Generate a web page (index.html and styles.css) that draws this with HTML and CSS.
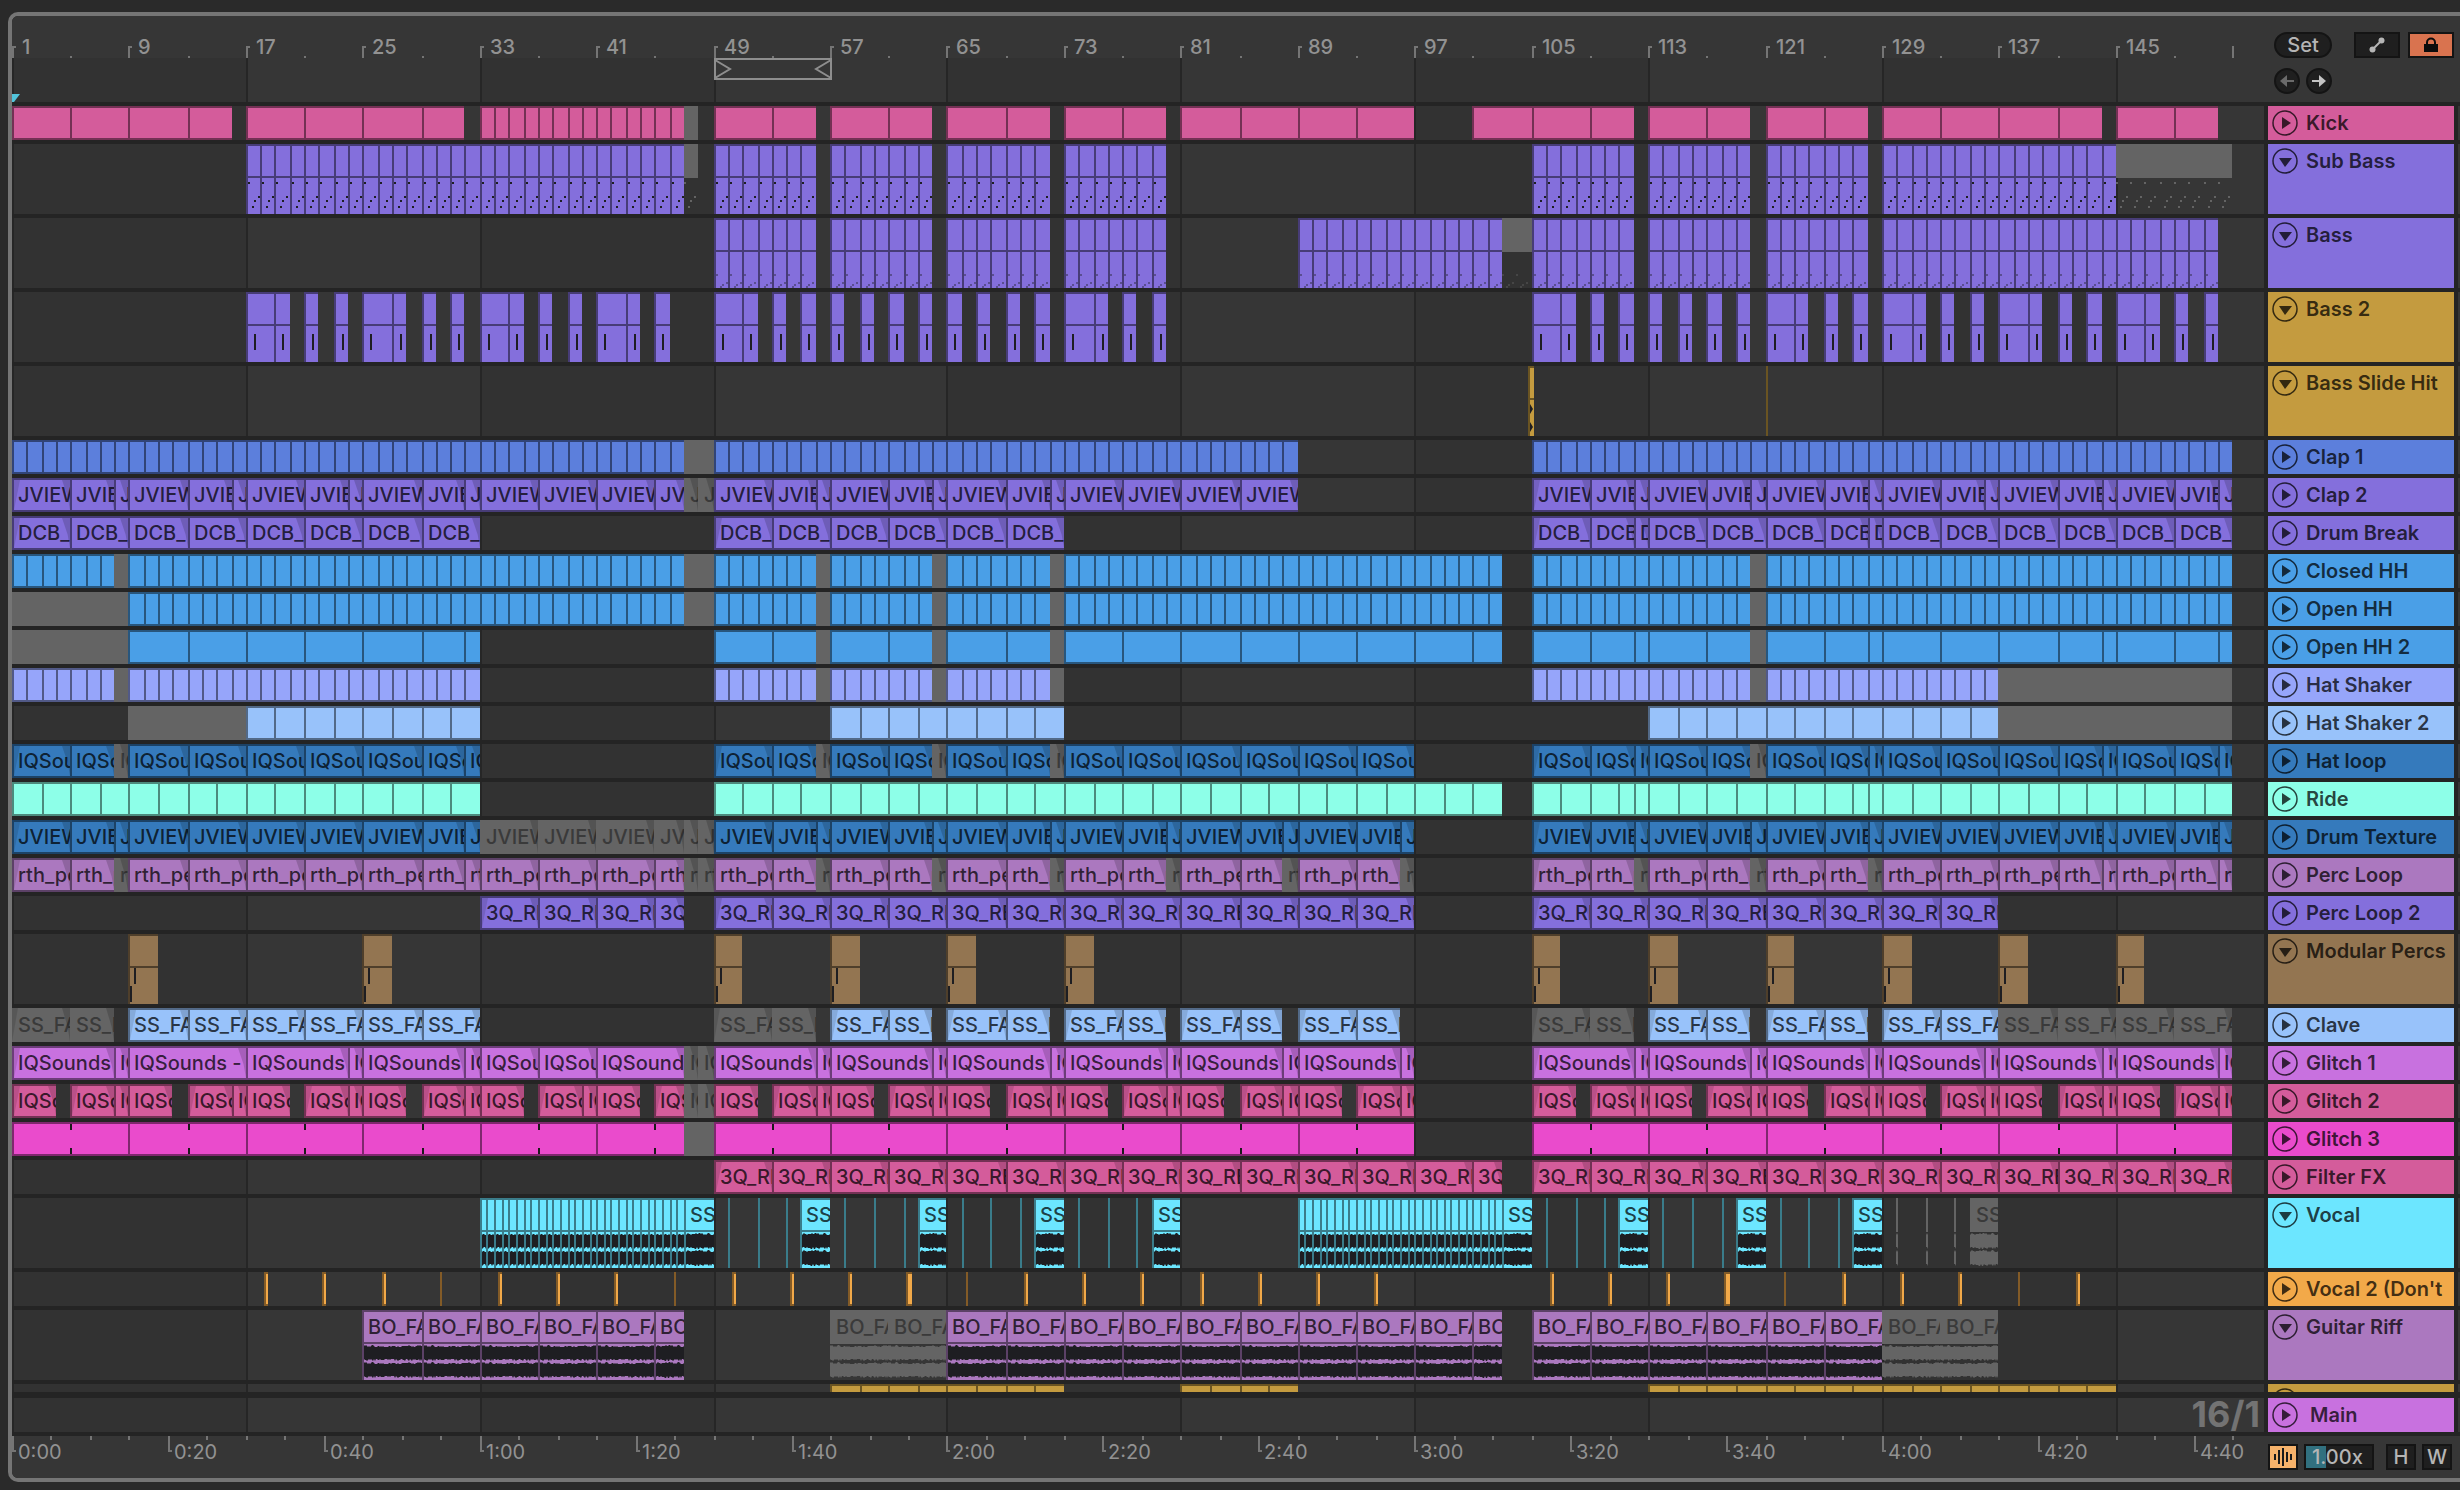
FILE: index.html
```html
<!DOCTYPE html>
<html lang="en">
<head>
    <meta charset="UTF-8">
    <title>Arrangement</title>
    <link rel="stylesheet" href="styles.css">
</head>
<body>

<main class="arrangement" id="arrangement">
    <header class="top">
        <div class="timeline">
            <div class="bar-ruler" id="bar_ruler"></div>
            <div class="scrub" id="scrub">
                <svg class="loop" id="loop"></svg>
                <svg class="insert-mark" viewBox="0 0 8 8"><path d="M0 0H8L2 8H0Z"/></svg>
            </div>
        </div>
        <div class="controls">
            <div class="control-row">
                <button class="pill">Set</button>
                <button class="box automation" aria-label="Automation mode">
                    <svg viewBox="0 0 16 16" width="16" height="16"><path d="M3 13L13 3" stroke="#b5b5b5" stroke-width="2"/><circle cx="3.500" cy="12.500" r="3" fill="#b5b5b5"/><circle cx="12.500" cy="3.500" r="3" fill="#b5b5b5"/></svg>
                </button>
                <button class="box lock" aria-label="Lock envelopes">
                    <svg viewBox="0 0 16 16" width="16" height="16"><path d="M4 8V5.500a4 4 0 0 1 8 0V8" fill="none" stroke="#0c0c0c" stroke-width="2"/><rect x="1" y="7" width="14" height="8" fill="#0c0c0c"/></svg>
                </button>
            </div>
            <div class="control-row">
                <button class="round" aria-label="Previous locator">
                    <svg viewBox="0 0 16 16" width="16" height="16"><path d="M15 8H6" stroke="#6b6b6b" stroke-width="2"/><path d="M1 8L8 2V14Z" fill="#6b6b6b"/></svg>
                </button>
                <button class="round" aria-label="Next locator">
                    <svg viewBox="0 0 16 16" width="16" height="16"><path d="M1 8H10" stroke="#c4c4c4" stroke-width="2"/><path d="M15 8L8 2V14Z" fill="#c4c4c4"/></svg>
                </button>
            </div>
        </div>
    </header>

    <section class="tracks" id="tracks"></section>

    <section class="track main-track">
        <div class="lane position">16/1</div>
        <div class="name orchid">
            <button class="fold" aria-label="Unfold Main"><svg viewBox="0 0 26 26"><circle cx="13" cy="13" r="12"/><path d="M10 7L19 13L10 19Z"/></svg></button>
            <span>Main</span>
        </div>
        <div class="edge"></div>
    </section>

    <footer class="bottom">
        <div class="time-ruler" id="time_ruler"></div>
        <div class="options">
            <button class="wave-btn" aria-label="Waveform zoom">
                <svg viewBox="0 0 20 20" width="20" height="20"><path d="M2 7V13M6 3V17M10 1V19M14 5V15M18 7V13" stroke="#1a1a1a" stroke-width="2"/></svg>
            </button>
            <input class="zoom" type="text" value="1.00x" aria-label="Waveform vertical zoom">
            <button class="letter height-btn">H</button>
            <button class="letter">W</button>
        </div>
    </footer>
</main>

<script src="script.js"></script>
</body>
</html>
```
FILE: styles.css
```css
* {
    box-sizing: border-box;
}

body {
    margin: 0;
    background-color: #2a2a2a;
    font-family: Inter, "Open Sans", sans-serif;
    font-size: 20px;
    line-height: 24px;
}

button,
input {
    font: inherit;
    padding: 0;
    margin: 0;
}

button {
    display: flex;
    align-items: center;
    justify-content: center;
}

.arrangement {
    margin: 12px 0 8px 8px;
    border: 4px solid #757575;
    border-right: none;
    border-radius: 10px 0 0 10px;
    background-color: #242424;
    overflow: hidden;
}

.top,
.track,
.bottom {
    display: grid;
    grid-template-columns: minmax(0, 1fr) 186px 2px;
    column-gap: 4px;
}

.top,
.bottom {
    background-color: #363636;
    color: #929292;
}

.bottom {
    margin-top: 4px;
}

/* rulers */

.bar-ruler,
.time-ruler {
    display: flex;
    overflow: hidden;
}

.bar-ruler {
    height: 42px;
    align-items: flex-end;
    font-weight: 500;
}

.scrub {
    height: 44px;
    background: var(--grid);
    display: flex;
    flex-direction: column;
    justify-content: space-between;
}

.loop {
    display: block;
    height: 22px;
    fill: none;
    stroke: #8e8e8e;
    stroke-width: 2px;
}

.insert-mark {
    width: 8px;
    height: 8px;
    fill: #52c3da;
}

.cell {
    flex: none;
    display: flex;
    white-space: nowrap;
}

.bar-ruler .cell {
    align-items: flex-end;
}

.bar-ruler .cell span {
    line-height: 22px;
}

.mark {
    flex: none;
    width: 4px;
    height: 12px;
    border-left: 2px solid #757575;
    border-top: 2px solid #757575;
}

.minor {
    flex: none;
    width: 2px;
    height: 2px;
    background-color: #757575;
}

.bar-ruler .mark {
    margin-right: 6px;
}

.bar-ruler .end {
    border-top: none;
}

.time-ruler .mark {
    height: 16px;
    border-top: none;
    border-bottom: 2px solid #757575;
    margin-right: 2px;
}

.time-ruler .minor {
    height: 4px;
}

.time-ruler .cell {
    height: 42px;
}

.time-ruler .cell span {
    margin-top: 4px;
}

/* buttons at the top right */

.controls {
    padding: 16px 0 8px 6px;
    display: flex;
    flex-direction: column;
    gap: 10px;
}

.control-row {
    display: flex;
    gap: 6px;
}

.pill,
.round,
.box,
.wave-btn,
.letter,
.zoom {
    height: 26px;
    border: 2px solid #141414;
    background-color: #1f1f1f;
    color: #b5b5b5;
    font-weight: 500;
}

.pill {
    width: 58px;
    border-radius: 13px;
}

.round {
    width: 26px;
    border-radius: 13px;
}

.box {
    width: 46px;
}

.automation {
    margin-left: auto;
}

.lock {
    background-color: #d9734f;
    margin-left: 2px;
}

/* tracks */

.tracks {
    display: flex;
    flex-direction: column;
    gap: 4px;
    padding: 4px 0 6px;
}

.track {
    height: 34px;
}

.track.open {
    height: 70px;
}

.track.cut {
    height: 8px;
    overflow: hidden;
}

.lane {
    display: flex;
    min-width: 0;
    overflow: hidden;
    background: var(--grid);
}

.edge {
    background-color: #363636;
}

.name {
    display: flex;
    align-items: flex-start;
    gap: 8px;
    padding: 4px;
    background-color: var(--c);
    color: rgba(0, 0, 0, 0.74);
    font-weight: 600;
    white-space: nowrap;
    overflow: hidden;
}

.fold {
    flex: none;
    width: 26px;
    height: 26px;
    border: none;
    background: none;
}

.fold svg {
    width: 26px;
    height: 26px;
}

.fold circle {
    fill: none;
    stroke: rgba(0, 0, 0, 0.74);
    stroke-width: 1.500px;
}

.fold path {
    fill: rgba(0, 0, 0, 0.74);
}

.name span {
    line-height: 26px;
}

.main-track .name {
    gap: 12px;
}

.position {
    justify-content: flex-end;
    padding-right: 4px;
    color: #737373;
    font-size: 36px;
    line-height: 32px;
    font-weight: 700;
}

/* clips */

.clip {
    flex: none;
    position: relative;
    height: 34px;
    overflow: hidden;
    white-space: nowrap;
    background-color: var(--c);
    color: rgba(0, 0, 0, 0.74);
    border: 2px solid rgba(0, 0, 0, 0.46);
    border-right: none;
}

.clip b {
    display: block;
    height: 30px;
    line-height: 30px;
    padding-left: 4px;
    font-weight: 500;
}

.clip svg {
    display: block;
    height: 36px;
    fill: #1e1e22;
}

.open .clip {
    height: 70px;
    border-bottom: none;
}

.open .clip b {
    height: 32px;
    border-bottom: 2px solid rgba(0, 0, 0, 0.46);
}

.clip.muted {
    border: none;
    background-color: #646464;
    color: #3a3a3a;
}

.clip.muted b {
    height: 34px;
    line-height: 34px;
    padding-left: 6px;
    border-bottom: none;
    background-color: #646464;
}

.open .clip.muted {
    background: none;
}

.clip.muted svg {
    fill: #646464;
}

.faint .clip svg {
    opacity: 0.4;
}

/* fade out at the end of an audio clip, fade in at the start of a run */

.fades .clip::after {
    content: "";
    position: absolute;
    top: 0;
    right: 0;
    width: 8px;
    height: 100%;
    background-color: rgba(0, 0, 0, 0.16);
    clip-path: polygon(0 0, 100% 0, 100% 100%, 70% 55%);
}

.fades .clip.first::before {
    content: "";
    position: absolute;
    top: 0;
    left: 0;
    width: 6px;
    height: 100%;
    background-color: rgba(0, 0, 0, 0.12);
    clip-path: polygon(0 0, 100% 0, 0 100%);
}

/* transient marks in the middle of a loop */

.halves .clip {
    display: flex;
    justify-content: center;
}

.halves .clip i {
    width: 2px;
    margin-left: var(--mid);
    margin-right: auto;
    background: linear-gradient(#1b1b1b 6px, transparent 6px, transparent 24px, #1b1b1b 24px);
}

/* colours */

.pink { --c: #d45c9b; }
.purple { --c: #846fdc; }
.gold { --c: #c49b3f; }
.royal { --c: #5c7fdc; }
.sky { --c: #4a9fe7; }
.lilac { --c: #96a5fa; }
.pale { --c: #98c2fa; }
.steel { --c: #357abc; }
.mint { --c: #8dffe8; }
.mauve { --c: #ab78bf; }
.brown { --c: #937551; }
.orchid { --c: #c871df; }
.magenta { --c: #ea4bcc; }
.cyan { --c: #6ce6ff; }
.orange { --c: #f2a949; }

/* bottom right */

.options {
    display: flex;
    gap: 6px;
    padding-top: 8px;
}

.wave-btn {
    width: 30px;
    background-color: #f6b26b;
}

.zoom {
    width: 70px;
    padding-left: 6px;
    background: linear-gradient(90deg, #31707f 20px, #1f1f1f 20px);
}

.letter {
    width: 30px;
}

.height-btn {
    margin-left: 6px;
}
```
FILE: script.js
```js
// Clip strings: "@n" jumps to bar n, "4" is a clip of 4 bars, "4x3" three of them,
// "-1" is a gap of one bar and a leading "m" mutes the clips.
const rep = (text, n) => (text + ' ').repeat(n);

const bass2a = '2 1 -1 1 -1 1 -1 ';
const bass2b = '1 -1 1 -1 1 -1 1 -1 ';
const hats = rep('1x7 m1', 3) + '1x30 @105 1x15 m1 1x32';
const vocalHits = '-1 .1 -1.9 .1 -1.9 .1 -.9 2 ';
const shout = '.28 -3.72';
const shortShout = '.1 -3.9 ';

const tracks = [
    {name: 'Kick', color: 'pink', clips: '@1 4x3 3 @17 4x3 3 @33 1x14 m1 @49 4 3 -1 4 3 -1 4 3 -1 4 3 -1 4x4 @101 4x2 3 @113 4 3 -1 4 3 -1 4x3 3 -1 4 3'},
    {name: 'Sub Bass', color: 'purple', open: true, draw: 'dots', clips: '@17 1x30 m1 @49 ' + rep('1x7 -1', 4) + '@105 ' + rep('1x7 -1', 3) + '1x16 m8'},
    {name: 'Bass', color: 'purple', open: true, draw: 'low', flags: 'faint', clips: '@49 ' + rep('1x7 -1', 4) + '@89 1x14 m2 ' + rep('1x7 -1', 3) + '1x23'},
    {name: 'Bass 2', color: 'gold', clipColor: 'purple', open: true, draw: 'stick', clips: '@17 ' + bass2a.repeat(3) + '2 1 -1 1 @49 ' + bass2a + bass2b.repeat(2) + bass2a + '@105 ' + bass2a + bass2b + bass2a.repeat(4)},
    {name: 'Bass Slide Hit', color: 'gold', open: true, draw: 'hit', clips: '@104.8 .4 @121 .1'},
    {name: 'Clap 1', color: 'royal', clips: '@1 1x46 m2 1x40 @105 1x48'},
    {name: 'Clap 2', color: 'purple', label: 'JVIEW', clips: '@1 ' + rep('4 3 1', 4) + '4x3 2 m1x2 ' + rep('4 3 1', 3) + '4x4 @105 ' + rep('4 3 1', 6)},
    {name: 'Drum Break', color: 'purple', label: 'DCB_', clips: '@1 4x8 @49 4x6 @105 4 3 1 4x3 3 1 4x6'},
    {name: 'Closed HH', color: 'sky', clips: '@1 1x7 m1 1x38 m2 ' + hats},
    {name: 'Open HH', color: 'sky', clips: '@1 m8 1x38 m2 ' + hats},
    {name: 'Open HH 2', color: 'sky', clips: '@1 m8 4x5 3 1 @49 ' + rep('4 3 m1', 3) + '4x7 2 @105 4 3 1 4 3 m1 4 3 1 4x2 4 3 1 4 3 1'},
    {name: 'Hat Shaker', color: 'lilac', clips: '@1 1x7 m1 1x24 @49 ' + rep('1x7 m1', 3) + '@105 1x15 m1 1x16 m16'},
    {name: 'Hat Shaker 2', color: 'pale', clips: '@9 m8 2x8 @57 2x8 @113 2x12 m16'},
    {name: 'Hat loop', color: 'steel', label: 'IQSounds', clips: '@1 4 3 m1 4x5 3 1 @49 ' + rep('4 3 m1', 3) + '4x6 @105 4 3 1 4 3 m1 4 3 1 4x2 4 3 1 4 3 1'},
    {name: 'Ride', color: 'mint', clips: '@1 2x16 @49 2x27 @105 2x3 1x2 2x4 2x3 1x2 2x12'},
    {name: 'Drum Texture', color: 'steel', label: 'JVIEW', clips: '@1 4 3 1 4x5 3 1 m4x3 m2 m1x2 ' + rep('4 3 1', 6) + '@105 ' + rep('4 3 1', 3) + '4x2 4 3 1 4 3 1'},
    {name: 'Perc Loop', color: 'mauve', label: 'rth_perc', clips: '@1 4 3 m1 4x5 3 1 4x3 2 m1x2 ' + rep('4 3 m1', 6) + '@105 ' + rep('4 3 m1', 3) + '4x2 4 3 1 4 3 1'},
    {name: 'Perc Loop 2', color: 'purple', label: '3Q_RE', clips: '@33 4x3 2 @49 4x12 @105 4x8'},
    {name: 'Modular Percs', color: 'brown', open: true, draw: 'percs', clips: '@9 2 @25 2 @49 ' + rep('2 -6', 4) + '@105 ' + rep('2 -6', 6)},
    {name: 'Clave', color: 'pale', label: 'SS_FA', clips: '@1 m4 m3 -1 4x6 @49 m4 m3 -1 ' + rep('4 3 -1', 5) + '@105 m4 m3 -1 4 3 -1 4 3 -1 4x2 m4x4'},
    {name: 'Glitch 1', color: 'orchid', label: 'IQSounds -', clips: '@1 7 1 8 7 1 7 1 4x2 6 m1x2 ' + rep('7 1', 6) + '@105 ' + rep('7 1', 6)},
    {name: 'Glitch 2', color: 'pink', label: 'IQSounds', clips: '@1 ' + rep('3 -1 3 1', 5) + '3 -1 2 m1x2 ' + rep('3 -1 3 1', 6) + '@105 ' + rep('3 -1 3 1', 6)},
    {name: 'Glitch 3', color: 'magenta', flags: 'halves', clips: '@1 8x5 6 m2 8x6 @105 8x6'},
    {name: 'Filter FX', color: 'pink', label: '3Q_RE', clips: '@49 4x13 2 @105 4x12'},
    {name: 'Vocal', color: 'cyan', open: true, draw: 'wave', label: 'SS_', clips: '@33 .5x28 2 ' + vocalHits.repeat(4) + '@89 .5x28 2 ' + vocalHits.repeat(3) + '-1 m.1 -1.9 m.1 -1.9 m.1 -.9 m2'},
    {name: "Vocal 2 (Don't", color: 'orange', clips: '@18.26 ' + rep(shout, 3) + shortShout + rep(shout, 3) + shortShout + rep(shout, 4) + shortShout + rep(shout, 7) + '@106.26 ' + rep(shout, 4) + shortShout + rep(shout, 3) + shortShout + shout},
    {name: 'Guitar Riff', color: 'mauve', open: true, draw: 'wave', label: 'BO_FA', clips: '@25 4x5 2 @57 m4x2 4x9 2 @105 4x6 m4x2'},
    {name: '', color: 'gold', cut: true, clips: '@57 2x8 @81 2x4 @113 2x16'}
];

const VISIBLE_BARS = 154.157;
const LAST_BAR = 153;
let barWidth = 14;

// left edge of a bar, kept on even pixels
function barX(bar) {
    return Math.round((bar - 1) * barWidth / 2) * 2;
}

function parseClips(text) {
    let list = [];
    let at = 1;
    for (const word of text.trim().split(/\s+/)) {
        if (word[0] === '@') {
            at = Number(word.slice(1));
        } else if (word[0] === '-') {
            at += Number(word.slice(1));
        } else {
            const muted = word[0] === 'm';
            const [len, times] = word.replace('m', '').split('x').map(Number);
            for (let i = 0; i < (times || 1); i++) {
                list.push({start: at, len: len, muted: muted});
                at += len;
            }
        }
    }
    return list;
}

function block(x, y, w, h) {
    return 'M' + x + ' ' + y + 'h' + w + 'v' + h + 'h-' + w + 'z';
}

function wavePath(width, seed) {
    let d = '';
    for (const mid of [9, 26]) {
        let up = '';
        let down = '';
        for (let x = 0; x <= width; x++) {
            const a = Math.abs(Math.sin((x + seed) * 12.9898) * 43758.5453) % 1;
            const b = Math.abs(Math.sin((x + seed) * 78.233) * 12543.123) % 1;
            up += 'L' + x + ' ' + (mid - 6 - Math.floor(a * 2.4));
            down = 'L' + x + ' ' + (mid + 6 + Math.floor(b * 2.4)) + down;
        }
        d += 'M0 ' + mid + up + down + 'z';
    }
    return d;
}

function drawing(kind, clip, width) {
    let d = '';
    if (kind === 'wave') {
        d = wavePath(width, Math.round(clip.len) * 7);
    } else if (kind === 'stick') {
        d = block(6, 8, 2, 16);
    } else if (kind === 'percs') {
        d = block(4, 0, 2, 16) + block(0, 18, 2, 16);
    } else if (kind === 'hit') {
        d = 'M0 4L3 9L0 14zM0 22L3 27L0 32z';
    } else {
        const ys = kind === 'dots' ? [4, 18, 22, 28] : [22, 30, 32, 34];
        for (let i = 0; i < clip.len; i++) {
            const x = barX(clip.start + i) - barX(clip.start);
            d += block(x, ys[0], 2, 2) + block(x + 10, ys[1], 2, 2) + block(x + 6, ys[2], 2, 2) + block(x + 4, ys[3], 2, 2);
        }
    }
    return '<svg width="' + width + '"><path d="' + d + '"/></svg>';
}

function laneHtml(track) {
    let html = '';
    let edge = 0;
    for (const clip of parseClips(track.clips)) {
        const left = barX(clip.start);
        const width = Math.max(2, barX(clip.start + clip.len) - left);
        let style = 'width:' + width + 'px';
        let cls = 'clip';
        if (left !== edge) style += ';margin-left:' + (left - edge) + 'px';
        if (left !== edge || left === 0) cls += ' first';
        if (clip.muted) cls += ' muted';

        let inside = '';
        if (track.flags === 'halves' && !clip.muted) {
            inside = '<i style="--mid:' + (barX(clip.start + 4) - left - 2) + 'px"></i>';
        } else if (track.open || track.label) {
            const text = track.label && clip.len >= 1 ? track.label : '';
            inside = '<b>' + text + '</b>';
        }
        if (track.open) inside += drawing(track.draw, clip, width);

        html += '<div class="' + cls + '" style="' + style + '">' + inside + '</div>';
        edge = left + width;
    }
    return html;
}

function trackHtml(track) {
    const kind = (track.open ? ' open' : '') + (track.cut ? ' cut' : '');
    const lane = (track.clipColor || track.color) + (track.label && !track.open ? ' fades' : '') + ' ' + (track.flags || '');
    const arrow = track.open ? 'M7 10H20L13 19Z' : 'M10 7L19 13L10 19Z';
    return '<div class="track' + kind + '">' +
        '<div class="lane ' + lane + '">' + laneHtml(track) + '</div>' +
        '<div class="name ' + track.color + '">' +
        '<button class="fold" aria-label="Fold ' + track.name + '"><svg viewBox="0 0 26 26"><circle cx="13" cy="13" r="12"/><path d="' + arrow + '"/></svg></button>' +
        '<span>' + track.name + '</span></div>' +
        '<div class="edge"></div></div>';
}

function gridBackground() {
    let stops = [];
    for (let bar = 1; bar <= LAST_BAR; bar += 16) {
        const x = barX(bar);
        const shade = (bar - 1) / 16 % 2 ? '#363636' : '#323232';
        stops.push('#262626 ' + x + 'px ' + (x + 2) + 'px', shade + ' ' + (x + 2) + 'px ' + barX(bar + 16) + 'px');
    }
    return 'linear-gradient(90deg, ' + stops.join(', ') + ')';
}

function barRuler() {
    let html = '';
    for (let bar = 1; bar < LAST_BAR; bar += 4) {
        const width = barX(bar + 4) - barX(bar);
        const inside = bar % 8 === 1 ? '<i class="mark"></i><span>' + bar + '</span>' : '<i class="minor"></i>';
        html += '<div class="cell" style="width:' + width + 'px">' + inside + '</div>';
    }
    return html + '<i class="mark end"></i>';
}

// 128 bpm, so five seconds are 8 / 3 bars
function timeRuler() {
    let html = '';
    for (let sec = 0; sec <= 285; sec += 5) {
        const from = barX(1 + sec * 8 / 15);
        const width = barX(1 + (sec + 5) * 8 / 15) - from;
        const text = Math.floor(sec / 60) + ':' + String(sec % 60).padStart(2, '0');
        const inside = sec % 20 === 0 ? '<i class="mark"></i><span>' + text + '</span>' : '<i class="minor"></i>';
        html += '<div class="cell" style="width:' + width + 'px">' + inside + '</div>';
    }
    return html;
}

function render() {
    const ruler = document.getElementById('bar_ruler');
    barWidth = ruler.clientWidth / VISIBLE_BARS;
    document.getElementById('arrangement').style.setProperty('--grid', gridBackground());
    ruler.innerHTML = barRuler();
    document.getElementById('time_ruler').innerHTML = timeRuler();
    document.getElementById('tracks').innerHTML = tracks.map(trackHtml).join('');

    const loop = document.getElementById('loop');
    const w = barX(57) - barX(49) + 2;
    loop.style.width = w + 'px';
    loop.style.marginLeft = barX(49) + 'px';
    loop.innerHTML = '<path d="M1 1H' + (w - 1) + 'V21H1ZM1 2L16 11L1 20M' + (w - 1) + ' 2L' + (w - 16) + ' 11L' + (w - 1) + ' 20"/>';
}

render();
window.addEventListener('resize', render);
```
